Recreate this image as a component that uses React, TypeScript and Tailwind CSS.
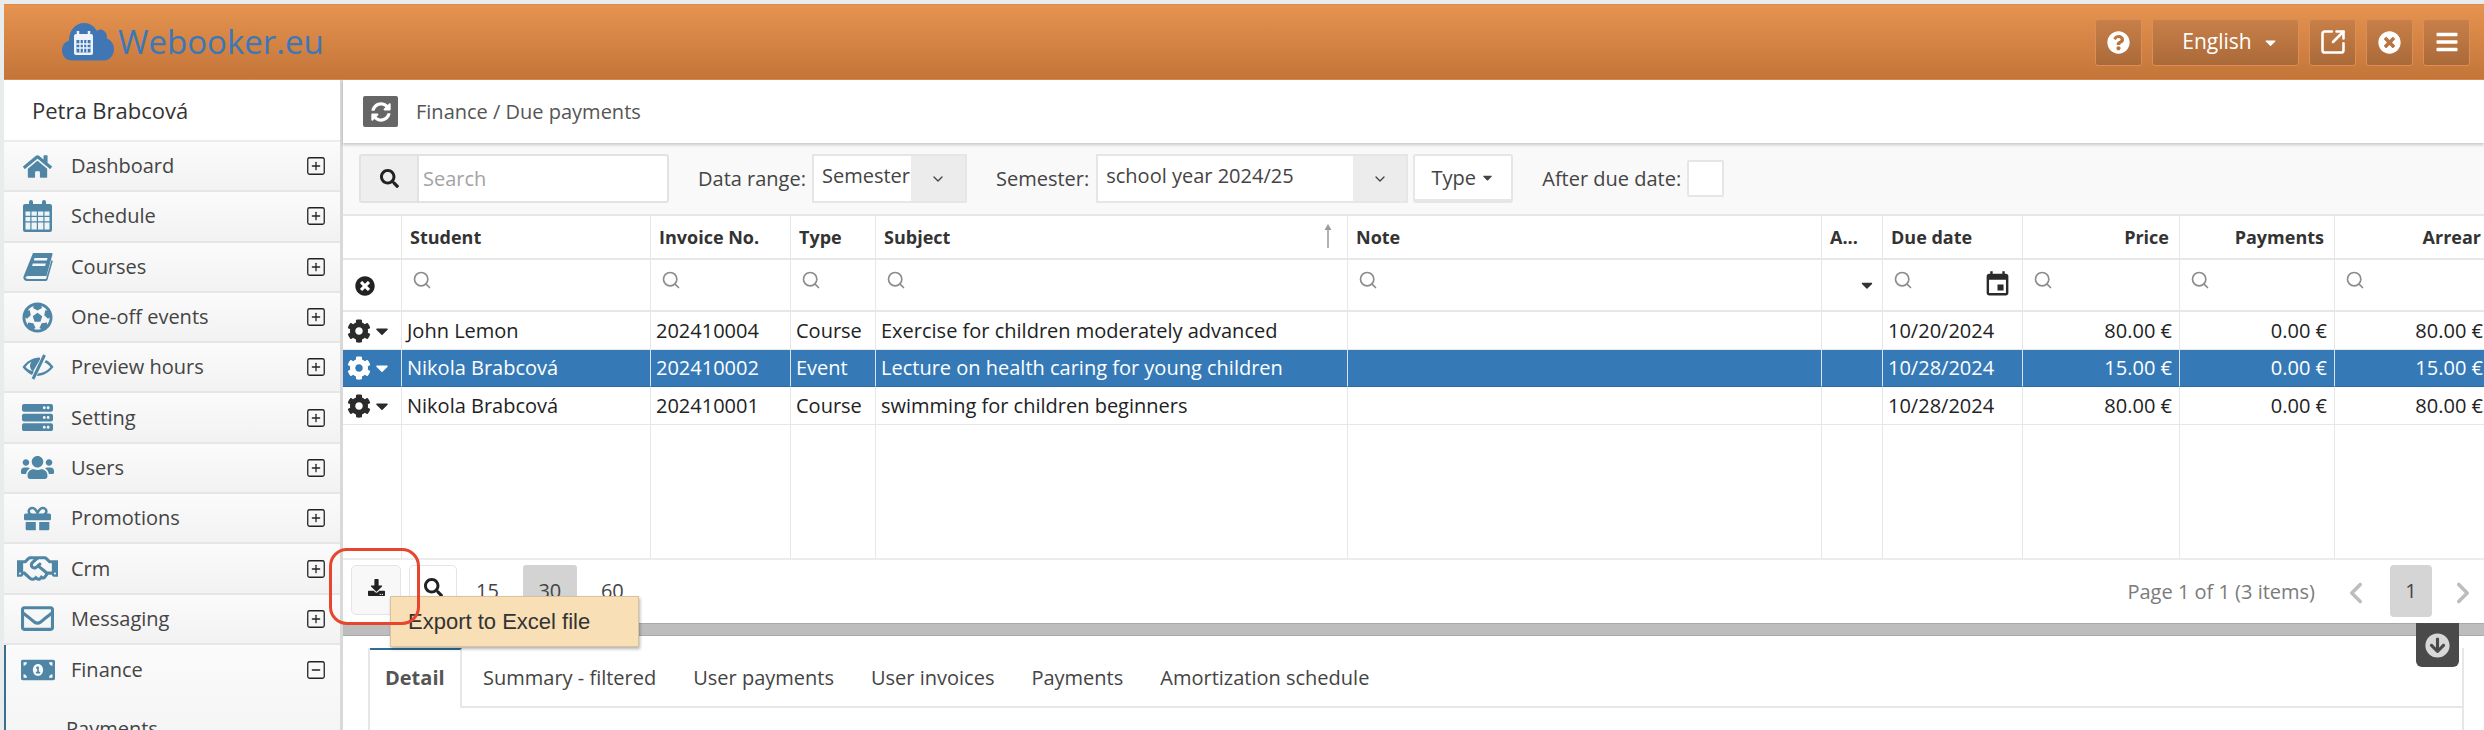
import React from 'react';
import { ChevronDown, ChevronLeft, ChevronRight, Search, SquareArrowOutUpRight, SquareMinus, SquarePlus } from 'lucide-react';
import {
    FaBars, FaCaretDown, FaCog, FaDownload, FaFutbol, FaGift, FaRegHandshake,
    FaHome, FaMoneyBillAlt, FaQuestionCircle, FaRegEnvelope, FaSearch, FaServer, FaSyncAlt, FaTimesCircle, FaUsers, FaArrowCircleDown,
} from 'react-icons/fa';
import { MdEvent } from 'react-icons/md';

const CalendarIcon = () => (
    <svg width="29" height="32" viewBox="0 0 29 32" fill="currentColor">
        <path d="M2 4h25a2 2 0 012 2v24a2 2 0 01-2 2H2a2 2 0 01-2-2V6a2 2 0 012-2z" />
        <rect x="6" y="0" width="4" height="8" rx="2" />
        <rect x="19" y="0" width="4" height="8" rx="2" />
        <path d="M2.500 11.500h4.800v4.300H2.500zM8.500 11.500h5.300v4.300H8.500zM15 11.500h5.300v4.300H15zM21.500 11.500h5v4.300h-5zM2.500 17h4.800v4.300H2.500zM8.500 17h5.300v4.300H8.500zM15 17h5.300v4.300H15zM21.500 17h5v4.300h-5zM2.500 22.500h4.800v7H2.500zM8.500 22.500h5.300v7H8.500zM15 22.500h5.300v7H15zM21.500 22.500h5v7h-5z" fill="#eef3f6" />
    </svg>
);

const BookIcon = () => (
    <svg width="30" height="29" viewBox="0 0 30 29" fill="currentColor">
        <path d="M10 1h18.500c.8 0 1.200.6 1 1.300L23.500 24H6c-2 0-3.500.6-3.500 1.500S4 27 6 27h17l5.500-19 1.300 1-5.300 18.800c-.2.700-.8 1.200-1.500 1.200H4c-2.500 0-4-2-3.500-4.500z" />
        <path d="M11.500 6h13l-.7 2.500h-13zM9.800 11.500h13l-.7 2.500h-13z" fill="#f5f7f8" />
    </svg>
);

const EyeSlashIcon = () => (
    <svg width="32" height="26" viewBox="0 0 32 26" fill="currentColor">
        <path d="M18 3.500C10 3.500 4 8 .500 13c2.500 3.500 5.500 6 9.500 8l1.800-3.200C8 16.500 5.500 15 3.500 13 5 10.800 7 9 9.500 7.800 8.500 9 8 10.500 8 12c0 2.200 1.200 4.200 3 5.500L18 5.500z" />
        <path d="M22.500 1L11 25" stroke="currentColor" strokeWidth="3" />
        <path d="M22.500 8.500c2.500 1 4.500 2.700 6 4.500-3 3.500-7.500 6-12.500 6.500L14.800 22c7-.2 12.700-4 16.700-9-1.800-2.700-4.500-5.500-7.500-7z" />
    </svg>
);

const menu = [
    { label: 'Dashboard', icon: <FaHome size={29} /> },
    { label: 'Schedule', icon: <CalendarIcon /> },
    { label: 'Courses', icon: <BookIcon /> },
    { label: 'One-off events', icon: <FaFutbol size={31} /> },
    { label: 'Preview hours', icon: <EyeSlashIcon /> },
    { label: 'Setting', icon: <FaServer size={31} /> },
    { label: 'Users', icon: <FaUsers size={33} /> },
    { label: 'Promotions', icon: <FaGift size={27} /> },
    { label: 'Crm', icon: <FaRegHandshake size={41} /> },
    { label: 'Messaging', icon: <FaRegEnvelope size={33} /> },
];

const columns = [
    { w: 'w-[59px]' },
    { w: 'w-[249px]', title: 'Student' },
    { w: 'w-[140px]', title: 'Invoice No.' },
    { w: 'w-[85px]', title: 'Type' },
    { w: 'w-[472px]', title: 'Subject' },
    { w: 'w-[474px]', title: 'Note' },
    { w: 'w-[61px]', title: 'A...' },
    { w: 'w-[140px]', title: 'Due date' },
    { w: 'w-[157px]', title: 'Price', right: true },
    { w: 'w-[155px]', title: 'Payments', right: true },
    { w: 'w-[157px]', title: 'Arrear', right: true },
];

const rows = [
    { h: 'h-[38px]', cells: ['John Lemon', '202410004', 'Course', 'Exercise for children moderately advanced', '', '', '10/20/2024', '80.00 €', '0.00 €', '80.00 €'] },
    { h: 'h-[37px]', active: true, cells: ['Nikola Brabcová', '202410002', 'Event', 'Lecture on health caring for young children', '', '', '10/28/2024', '15.00 €', '0.00 €', '15.00 €'] },
    { h: 'h-[38px]', cells: ['Nikola Brabcová', '202410001', 'Course', 'swimming for children beginners', '', '', '10/28/2024', '80.00 €', '0.00 €', '80.00 €'] },
];

const tabs = ['Summary - filtered', 'User payments', 'User invoices', 'Payments', 'Amortization schedule'];

const HeaderButton = ({ children, className = 'w-[47px]' }: { children: React.ReactNode; className?: string }) => (
    <button className={`flex h-[47px] items-center justify-center rounded-[3px] border border-[#d98f57] bg-gradient-to-b from-[#c87f48] to-[#aa6a39] text-white ${className}`}>
        {children}
    </button>
);

const Logo = () => (
    <svg width="52" height="38" viewBox="0 0 52 38" className="shrink-0">
        <path d="M10 37.500C4 37.500 0 33 0 27c0-5 3-8 7-9.500C7 8 13 0 22 0c6 0 10 3 13 8 2-2 5-2 7 0 3 2 3 5 3 7.500 4 1.500 7 5.500 7 10.500 0 6-4 11.500-10 11.500z" fill="#3f76b3" />
        <rect x="12" y="11" width="19" height="21" rx="2" fill="#eef3f9" />
        <path d="M16 8v6M27 8v6" stroke="#eef3f9" strokeWidth="2.500" />
        <path d="M14.500 17h14v12.500h-14z" fill="#3f76b3" />
        <path d="M18 17v12.500M21.500 17v12.500M25 17v12.500M14.500 21h14M14.500 25h14" stroke="#eef3f9" strokeWidth="1.300" />
    </svg>
);

const Sidebar = () => (
    <aside className="w-[339px] shrink-0 border-r-[3px] border-[#d9d9d9] bg-white text-[20px] text-[#444]">
        <div className="flex h-[62px] items-center border-b-2 border-[#ececec] pl-[28px] text-[22px] text-[#333]">Petra Brabcová</div>
        {menu.map((item) => (
            <div key={item.label} className="flex h-[50.300px] items-center border-b-2 border-[#e6e6e6] bg-gradient-to-b from-[#fbfbfb] to-[#f2f2f2] pl-[7px] pr-[13px]">
                <span className="flex w-[53px] justify-center text-[#4f86a6]">{item.icon}</span>
                <span className="ml-[7px]">{item.label}</span>
                <SquarePlus size={22} strokeWidth={1.400} className="ml-auto text-[#222]" />
            </div>
        ))}
        <div className="h-[100px] border-l-2 border-[#3c6f8f] bg-gradient-to-b from-[#fbfbfb] to-[#f4f4f4]">
            <div className="flex h-[50px] items-center pl-[5px] pr-[13px]">
                <span className="flex w-[53px] justify-center text-[#4f86a6]"><FaMoneyBillAlt size={34} /></span>
                <span className="ml-[7px]">Finance</span>
                <SquareMinus size={22} strokeWidth={1.400} className="ml-auto text-[#222]" />
            </div>
            <div className="pl-[60px] pt-[19px]">Payments</div>
        </div>
    </aside>
);

const Toolbar = () => (
    <div className="flex h-[71px] items-center bg-[#f9f9f9] pl-[16px] text-[20px] text-[#444]">
        <div className="flex h-[49px] w-[310px] rounded-[3px] border-2 border-[#e2e2e2] bg-white">
            <span className="flex w-[56px] items-center justify-center bg-[#eeeeee] text-[#222]"><FaSearch size={19} /></span>
            <span className="flex items-center border-l-2 border-[#e2e2e2] pl-[4px] text-[#a3a3a3]">Search</span>
        </div>
        <span className="ml-[29px]">Data range:</span>
        <div className="ml-[6px] flex h-[49px] w-[155px] border-2 border-[#e6e6e6] bg-white">
            <span className="flex-1 pl-[8px] pt-[5px]">Semester</span>
            <span className="flex w-[54px] items-center justify-center bg-[#ececec]"><ChevronDown size={16} /></span>
        </div>
        <span className="ml-[29px]">Semester:</span>
        <div className="ml-[7px] flex h-[49px] w-[312px] border-2 border-[#e6e6e6] bg-white">
            <span className="flex-1 pl-[8px] pt-[5px]">school year 2024/25</span>
            <span className="flex w-[53px] items-center justify-center bg-[#ececec]"><ChevronDown size={16} /></span>
        </div>
        <div className="ml-[5px] flex h-[49px] w-[100px] items-center justify-center gap-[4px] rounded-[3px] border-2 border-b-4 border-[#e6e6e6] bg-white">
            Type <FaCaretDown size={15} />
        </div>
        <span className="ml-[29px]">After due date:</span>
        <span className="ml-[6px] h-[37px] w-[37px] rounded-[2px] border-2 border-[#e6e6e6] bg-white" />
    </div>
);

const FilterCell = ({ index }: { index: number }) => {
    if (index === 0) {
        return <FaTimesCircle size={20} className="ml-[12px] mt-[2px] text-[#222]" />;
    }
    if (index === 6) {
        return <div className="flex justify-end pr-[6px]"><FaCaretDown size={18} className="text-[#333]" /></div>;
    }
    return (
        <div className="relative flex h-[30px] items-start pb-[5px] pl-[10px]">
            <Search size={20} strokeWidth={2} className="text-[#8c8c8c]" />
            {index === 7 && <MdEvent size={29} className="absolute right-[10px] top-0 text-[#2b2b2b]" />}
        </div>
    );
};

const Grid = () => (
    <div className="h-[344px] overflow-hidden border-t-2 border-[#e7e7e7]">
        <table className="w-[2149px] table-fixed border-separate border-spacing-0 text-[20px] text-[#222]">
            <colgroup>
                {columns.map((col, i) => <col key={i} className={col.w} />)}
            </colgroup>
            <thead>
                <tr className="h-[44px]">
                    {columns.map((col, i) => (
                        <th key={i} className={`relative border-b-2 border-r border-[#e7e7e7] px-[8px] text-[18px] font-bold text-[#333] ${col.right ? 'pr-[10px] text-right' : 'text-left'}`}>
                            {col.title}
                            {i === 4 && (
                                <svg width="10" height="24" viewBox="0 0 10 24" className="absolute right-[14px] top-[8px]">
                                    <path d="M5 24V3" stroke="#9a9a9a" strokeWidth="1.500" />
                                    <path d="M1.500 6L5 0l3.500 6z" fill="#9a9a9a" />
                                </svg>
                            )}
                        </th>
                    ))}
                </tr>
                <tr className="h-[52px]">
                    {columns.map((col, i) => (
                        <th key={i} className="border-b-2 border-r border-[#e7e7e7] font-normal">
                            <FilterCell index={i} />
                        </th>
                    ))}
                </tr>
            </thead>
            <tbody>
                {rows.map((row, r) => (
                    <tr key={r} className={`${row.h} ${row.active ? 'bg-[#357ab6] text-white' : ''}`}>
                        <td className={`border-b border-r ${row.active ? 'border-[#d5e3ef] border-b-[#2a6ba5]' : 'border-[#e7e7e7]'}`}>
                            <div className={`flex items-center pl-[4px] ${row.active ? 'text-white' : 'text-[#2b2b2b]'}`}>
                                <FaCog size={24} />
                                <FaCaretDown size={20} className="ml-[1px]" />
                            </div>
                        </td>
                        {row.cells.map((text, i) => (
                            <td key={i} className={`whitespace-nowrap border-b border-r px-[5px] ${i > 6 ? 'pr-[7px] text-right' : ''} ${i === 9 ? 'pr-[8px]' : ''} ${row.active ? 'border-[#d5e3ef] border-b-[#2a6ba5]' : 'border-[#e7e7e7]'}`}>
                                {text}
                            </td>
                        ))}
                    </tr>
                ))}
                <tr className="h-[133px]">
                    {columns.map((col, i) => <td key={i} className="border-r border-[#e7e7e7]" />)}
                </tr>
            </tbody>
        </table>
    </div>
);

const Pager = () => (
    <div className="relative flex h-[65px] border-t-2 border-[#ececec] bg-white pl-[8px] pr-[4px] pt-[5px] text-[20px] text-[#444]">
        <button className="flex h-[50px] w-[50px] items-center justify-center rounded-[5px] border border-[#e4e4e4] bg-[#f8f8f8] pb-[6px] text-[#222]"><FaDownload size={17} /></button>
        <button className="ml-[8px] flex h-[50px] w-[48px] items-center justify-center rounded-[5px] border border-[#e4e4e4] pb-[6px] text-[#222]"><FaSearch size={19} /></button>
        <span className="ml-[19px] pt-[11px]">15</span>
        <span className="ml-[24px] h-[50px] w-[54px] rounded-[3px] bg-[#d3d3d3] pt-[11px] text-center">30</span>
        <span className="ml-[24px] pt-[11px]">60</span>
        <div className="ml-auto flex items-start">
            <span className="pt-[12px] text-[#7b7b7b]">Page 1 of 1 (3 items)</span>
            <ChevronLeft size={34} strokeWidth={2.500} className="ml-[24px] mt-[11px] text-[#bdbdbd]" />
            <span className="ml-[17px] h-[52px] w-[42px] rounded-[4px] bg-[#d5d5d5] pt-[11px] text-center">1</span>
            <ChevronRight size={34} strokeWidth={2.500} className="ml-[14px] mt-[11px] text-[#bdbdbd]" />
        </div>
        <div className="absolute left-[47px] top-[36px] z-20 flex h-[51px] w-[249px] items-center border border-[#d9c39a] bg-[#f8dfb5] pl-[17px] font-['Liberation_Sans',sans-serif] text-[22px] text-[#333] shadow-[1px_2px_3px_rgba(0,0,0,0.3)]">
            Export to Excel file
        </div>
        <div className="absolute -left-[14px] -top-[12px] z-30 h-[77px] w-[91px] rounded-[18px] border-[3px] border-[#e8452f]" />
    </div>
);

const DetailTabs = () => (
    <div className="relative h-[94px] bg-white pl-[25px] pr-[20px] pt-[12px] text-[20px] text-[#444]">
        <div className="absolute right-[25px] -top-[13px] flex h-[44px] w-[43px] items-center justify-center rounded-b-[6px] bg-[#4a4a4a] text-[#d8d8d8]">
            <FaArrowCircleDown size={25} />
        </div>
        <div className="flex h-[82px] border-r-2 border-[#e7e7e7] border-l-2">
            <div className="h-[60px] w-[92px] border-r-2 border-t-2 border-r-[#e7e7e7] border-t-[#2f6f96] pl-[15px] pt-[13px] font-bold text-[#555]">Detail</div>
            <div className="flex h-[60px] flex-1 gap-[37px] border-b-2 border-[#e7e7e7] pl-[21px] pt-[15px]">
                {tabs.map((tab) => <span key={tab}>{tab}</span>)}
            </div>
        </div>
    </div>
);

const App: React.FC = () => {
    return (
        <div className="h-[730px] w-[2484px] overflow-hidden bg-[#e9eced] pl-[4px] pt-[4px] font-['Open_Sans',sans-serif]">
            <header className="flex h-[76px] items-center border-y border-[#dd8a48] bg-gradient-to-b from-[#e69350] to-[#c37539] pl-[58px] pr-[14px]">
                <Logo />
                <span className="ml-[4px] text-[33px] text-[#3a78b9]">Webooker.eu</span>
                <div className="ml-auto flex items-center gap-[10px]">
                    <HeaderButton><FaQuestionCircle size={23} /></HeaderButton>
                    <HeaderButton className="w-[147px] gap-[10px] pl-[10px] text-[21px]">English <FaCaretDown size={17} /></HeaderButton>
                    <HeaderButton><SquareArrowOutUpRight size={28} strokeWidth={2.200} /></HeaderButton>
                    <HeaderButton><FaTimesCircle size={23} /></HeaderButton>
                    <HeaderButton><FaBars size={24} /></HeaderButton>
                </div>
            </header>
            <div className="flex h-[650px] bg-white">
                <Sidebar />
                <main className="min-w-0 flex-1">
                    <div className="relative z-10 flex h-[63px] items-center bg-white pl-[20px] text-[20px] text-[#555] shadow-[0_2px_3px_rgba(0,0,0,0.2)]">
                        <span className="flex h-[31px] w-[35px] items-center justify-center rounded-[2px] bg-[#666] text-white"><FaSyncAlt size={20} /></span>
                        <span className="ml-[18px]">Finance / Due payments</span>
                    </div>
                    <Toolbar />
                    <Grid />
                    <Pager />
                    <div className="h-[13px] border-y border-[#a9a9a9] bg-[#bdbdbd]" />
                    <DetailTabs />
                </main>
            </div>
        </div>
    );
};

export default App;
